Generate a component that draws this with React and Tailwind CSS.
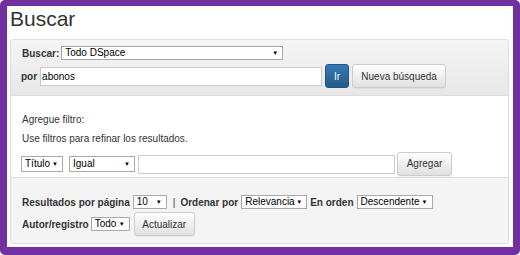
import React from 'react';

const font = { fontFamily: '"Liberation Sans", Arial, sans-serif' };

function Select({ value, className = '' }) {
  return (
    <span
      className={`inline-flex items-center justify-between border border-[#a9a9a9] bg-white pl-[3px] pr-[4px] leading-none text-black ${className}`}
    >
      <span>{value}</span>
      <span className="text-[6px] leading-none">▼</span>
    </span>
  );
}

function Button({ children, className = '' }) {
  return (
    <span
      className={`inline-flex items-center justify-center h-[24px] rounded-[3px] border border-[#cccccc] bg-gradient-to-b from-white to-[#e0e0e0] text-[10px] text-[#333333] shadow-[0_1px_0_rgba(0,0,0,0.05)] ${className}`}
    >
      {children}
    </span>
  );
}

export default function App() {
  return (
    <div className="w-[520px] h-[255px] bg-white" style={font}>
      <div className="w-[520px] h-[255px] rounded-[5px] border-t-[6px] border-x-[7px] border-b-[8px] border-[#7030a0] bg-white pl-[3px] pr-[4px]">
        <h1 className="text-[21px] leading-[24px] text-[#333333] pt-[1px]">Buscar</h1>

        <div className="mt-[8px] rounded-[3px] border border-[#dddddd] text-[10px] text-[#333333]">
          {/* Search */}
          <div className="bg-gradient-to-b from-[#f5f5f5] to-[#e8e8e8] border-b border-[#dddddd] rounded-t-[3px] pl-[11px] pt-[6px] pb-[7px]">
            <div className="flex items-center h-[14px]">
              <span className="font-bold">Buscar:</span>
              <Select value="Todo DSpace" className="ml-[2px] w-[222px] h-[14px] text-[10px]" />
            </div>
            <div className="flex items-center mt-[4px] h-[24px]">
              <span className="font-bold -ml-[1px]">por</span>
              <span className="ml-[3px] w-[282px] h-[19px] border border-[#cccccc] bg-white flex items-center pl-[1px] text-[10px] text-black">
                abonos
              </span>
              <span className="ml-[3px] w-[24px] h-[24px] rounded-[3px] border border-[#245580] bg-gradient-to-b from-[#337ab7] to-[#265a88] text-white flex items-center justify-center">
                Ir
              </span>
              <Button className="ml-[3px] w-[94px]">Nueva búsqueda</Button>
            </div>
          </div>

          {/* Filters */}
          <div className="bg-white pl-[11px] pt-[18px] pb-[1px] leading-[12px]">
            <p>Agregue filtro:</p>
            <p className="mt-[7px]">Use filtros para refinar los resultados.</p>
            <div className="flex items-center mt-[7px] h-[24px]">
              <Select value="Título" className="-ml-[1px] w-[42px] h-[16px] text-[10px]" />
              <Select value="Igual" className="ml-[6px] w-[66px] h-[16px] text-[10px]" />
              <span className="ml-[3px] w-[257px] h-[19px] border border-[#cccccc] bg-white" />
              <Button className="ml-[2px] w-[55px]">Agregar</Button>
            </div>
          </div>

          {/* Options */}
          <div className="bg-[#f4f4f4] border-t border-[#dddddd] rounded-b-[3px] pl-[11px] pt-[17px] pb-[7px]">
            <div className="flex items-center h-[14px]">
              <span className="font-bold">Resultados por página</span>
              <Select value="10" className="ml-[3px] w-[34px] h-[14px] text-[10px]" />
              <span className="ml-[6px]">|</span>
              <span className="ml-[5px] font-bold">Ordenar por</span>
              <Select value="Relevancia" className="ml-[3px] w-[66px] h-[14px] text-[10px]" />
              <span className="ml-[3px] font-bold">En orden</span>
              <Select value="Descendente" className="ml-[3px] w-[76px] h-[14px] text-[10px]" />
            </div>
            <div className="flex items-center mt-[3px] h-[24px]">
              <span className="font-bold">Autor/registro</span>
              <Select value="Todo" className="ml-[2px] w-[39px] h-[14px] text-[10px]" />
              <Button className="ml-[4px] w-[61px]">Actualizar</Button>
            </div>
          </div>
        </div>
      </div>
    </div>
  );
}
